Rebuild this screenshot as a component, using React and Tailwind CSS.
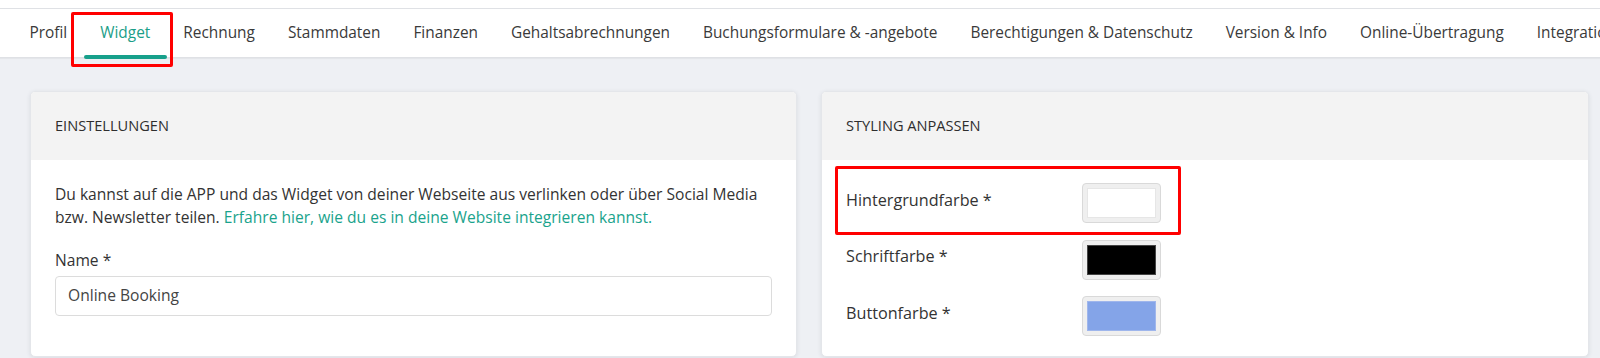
const TABS = [
  'Profil',
  'Widget',
  'Rechnung',
  'Stammdaten',
  'Finanzen',
  'Gehaltsabrechnungen',
  'Buchungsformulare & -angebote',
  'Berechtigungen & Datenschutz',
  'Version & Info',
  'Online-Übertragung',
  'Integrationen',
];

const COLORS = [
  { label: 'Hintergrundfarbe *', fill: 'bg-white border border-[#e6e6e6]', marked: true },
  { label: 'Schriftfarbe *', fill: 'bg-black border border-[#444]' },
  { label: 'Buttonfarbe *', fill: 'bg-[#84a4e8] border border-[#9fb6ec]' },
];

function Tabs() {
  return (
    <div className="bg-white pt-2">
      <nav className="flex h-[50px] items-stretch whitespace-nowrap border-y border-[#dfe1e5] pl-[13px] shadow-[0_1px_1px_rgba(0,0,0,0.04)]">
        {TABS.map((tab) => {
          const active = tab === 'Widget';
          return (
            <div
              key={tab}
              className={`relative flex shrink-0 items-center px-[16.5px] text-[15.4px] ${
                active ? 'text-[#1b9e88]' : 'text-[#3a3a3a]'
              }`}
            >
              {tab}
              {active && (
                <>
                  <span className="absolute bottom-[-2px] left-0 right-0 h-[4px] rounded-full bg-[#17a08b]" />
                  <span className="pointer-events-none absolute -bottom-[10px] -left-[13px] -right-[6px] top-[3px] rounded-[2px] border-[3px] border-[#ff0000]" />
                </>
              )}
            </div>
          );
        })}
      </nav>
    </div>
  );
}

function Card({ title, width, children }) {
  return (
    <section
      className={`${width} shrink-0 overflow-hidden rounded-[5px] border border-[#e4e6ea] bg-white shadow-[0_1px_4px_rgba(40,50,70,0.10)]`}
    >
      <header className="flex h-[68px] items-center bg-[#f3f3f3] px-6 text-[14.6px] uppercase text-[#2e2e2e]">
        {title}
      </header>
      {children}
    </section>
  );
}

export default function App() {
  return (
    <div className="h-[358px] w-[1600px] overflow-hidden bg-[#eef0f4] font-['Open_Sans',sans-serif] text-[#333]">
      <Tabs />

      {/* Cards */}
      <div className="flex gap-6 pl-[30px] pt-[33px]">
        <Card title="Einstellungen" width="w-[767px]">
          <div className="px-6 pb-10 pt-[23px]">
            <p className="text-[15.6px] leading-[23px] text-[#333]">
              Du kannst auf die APP und das Widget von deiner Webseite aus verlinken oder über Social Media bzw.
              Newsletter teilen.{' '}
              <span className="text-[#1aa38c]">Erfahre hier, wie du es in deine Website integrieren kannst.</span>
            </p>
            <label className="mt-[20px] block text-[15.6px] leading-[23px]">Name *</label>
            <div className="mt-[4px] flex h-[40px] items-center rounded-[4px] border border-[#dcdcdc] px-3 text-[15.6px] text-[#444]">
              Online Booking
            </div>
          </div>
        </Card>

        <Card title="Styling anpassen" width="w-[768px]">
          <div className="flex flex-col gap-[16.5px] px-6 pt-[23px]">
            {COLORS.map((c) => (
              <div key={c.label} className="relative flex items-center">
                <span className="-mt-[6px] w-[236px] text-[16.2px]">{c.label}</span>
                <div className="flex h-[40px] w-[79px] items-center justify-center rounded-[4px] border border-[#d9d9d9] bg-[#efefef]">
                  <div className={`h-[30px] w-[69px] ${c.fill}`} />
                </div>
                {c.marked && (
                  <span className="pointer-events-none absolute -left-[11px] -top-[17px] h-[69px] w-[346px] rounded-[2px] border-[3px] border-[#ff0000]" />
                )}
              </div>
            ))}
          </div>
        </Card>
      </div>
    </div>
  );
}
